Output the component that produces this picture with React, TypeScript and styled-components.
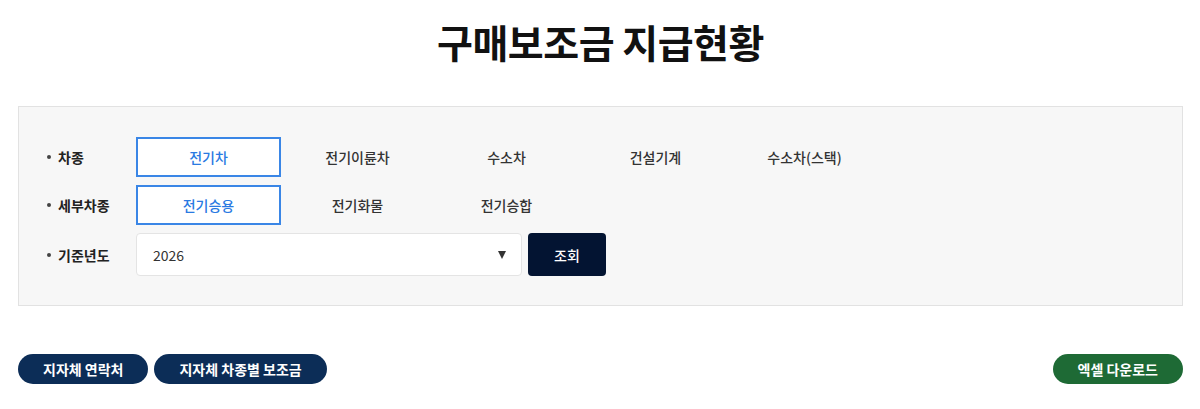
import styled, { createGlobalStyle } from 'styled-components';

const GlobalStyle = createGlobalStyle`
  html, body {
    margin: 0;
    padding: 0;
    background: #fff;
    font-family: 'Noto Sans CJK KR', 'Noto Sans', sans-serif;
    color: #222;
  }
`;

const vehicleTypes = ['전기차', '전기이륜차', '수소차', '건설기계', '수소차(스택)'];
const subTypes = ['전기승용', '전기화물', '전기승합'];

function App() {
  return (
    <>
      <GlobalStyle />
      <Page>
        <Title>구매보조금 지급현황</Title>

        <SearchPanel>
          <Row>
            <Label>차종</Label>
            <TabList>
              {vehicleTypes.map((name, i) => (
                <Tab key={name} $active={i === 0}>
                  {name}
                </Tab>
              ))}
            </TabList>
          </Row>
          <Row>
            <Label>세부차종</Label>
            <TabList>
              {subTypes.map((name, i) => (
                <Tab key={name} $active={i === 0}>
                  {name}
                </Tab>
              ))}
            </TabList>
          </Row>
          <Row>
            <Label>기준년도</Label>
            <Select>
              <span>2026</span>
              <Caret />
            </Select>
            <SearchButton type="button">조회</SearchButton>
          </Row>
        </SearchPanel>

        <ButtonBar>
          <ButtonGroup>
            <PillButton $color="#0c2d57">지자체 연락처</PillButton>
            <PillButton $color="#0c2d57">지자체 차종별 보조금</PillButton>
          </ButtonGroup>
          <PillButton $color="#1e6a35">엑셀 다운로드</PillButton>
        </ButtonBar>
      </Page>
    </>
  );
}

const Page = styled.div`
  padding: 0 17px 0 18px;
`;

const Title = styled.h1`
  margin: 0;
  height: 106px;
  box-sizing: border-box;
  padding-top: 12px;
  text-align: center;
  font-size: 39px;
  font-weight: 700;
  line-height: 58px;
  color: #111;
  letter-spacing: -0.5px;
`;

const SearchPanel = styled.div`
  display: flex;
  flex-direction: column;
  gap: 8px;
  padding: 30px 28px 29px 27px;
  background: #f7f7f7;
  border: 1px solid #e2e2e2;
`;

const Row = styled.div`
  display: flex;
  align-items: center;
`;

const Label = styled.div`
  width: 90px;
  flex-shrink: 0;
  font-size: 14px;
  font-weight: 700;
  color: #222;
  display: flex;
  align-items: center;
  &::before {
    content: '';
    width: 4px;
    height: 4px;
    border-radius: 50%;
    background: #444;
    margin-left: 1px;
    margin-right: 7px;
  }
`;

const TabList = styled.div`
  display: flex;
  gap: 4px;
`;

const Tab = styled.div<{ $active?: boolean }>`
  width: 145px;
  height: 40px;
  box-sizing: border-box;
  display: flex;
  align-items: center;
  justify-content: center;
  font-size: 14px;
  font-weight: 500;
  color: ${(p) => (p.$active ? '#2a7ae2' : '#333')};
  background: ${(p) => (p.$active ? '#fff' : 'transparent')};
  border: 2px solid ${(p) => (p.$active ? '#3a86e6' : 'transparent')};
`;

const Select = styled.div`
  width: 386px;
  height: 43px;
  box-sizing: border-box;
  display: flex;
  align-items: center;
  justify-content: space-between;
  padding: 0 15px 0 16px;
  background: #fff;
  border: 1px solid #e4e4e4;
  border-radius: 4px;
  font-size: 14px;
  color: #333;
`;

const Caret = styled.span`
  width: 0;
  height: 0;
  border-left: 4.5px solid transparent;
  border-right: 4.5px solid transparent;
  border-top: 8px solid #333;
`;

const SearchButton = styled.button`
  margin-left: 6px;
  width: 78px;
  height: 43px;
  border: none;
  border-radius: 4px;
  background: #031432;
  color: #fff;
  font-family: inherit;
  font-size: 14px;
  font-weight: 500;
`;

const ButtonBar = styled.div`
  display: flex;
  justify-content: space-between;
  align-items: center;
  margin-top: 48px;
`;

const ButtonGroup = styled.div`
  display: flex;
  gap: 6px;
`;

const PillButton = styled.button<{ $color: string }>`
  height: 30px;
  padding: 0 25px;
  border: none;
  border-radius: 15px;
  background: ${(p) => p.$color};
  color: #fff;
  font-family: inherit;
  font-size: 14px;
  font-weight: 700;
`;

export default App;
